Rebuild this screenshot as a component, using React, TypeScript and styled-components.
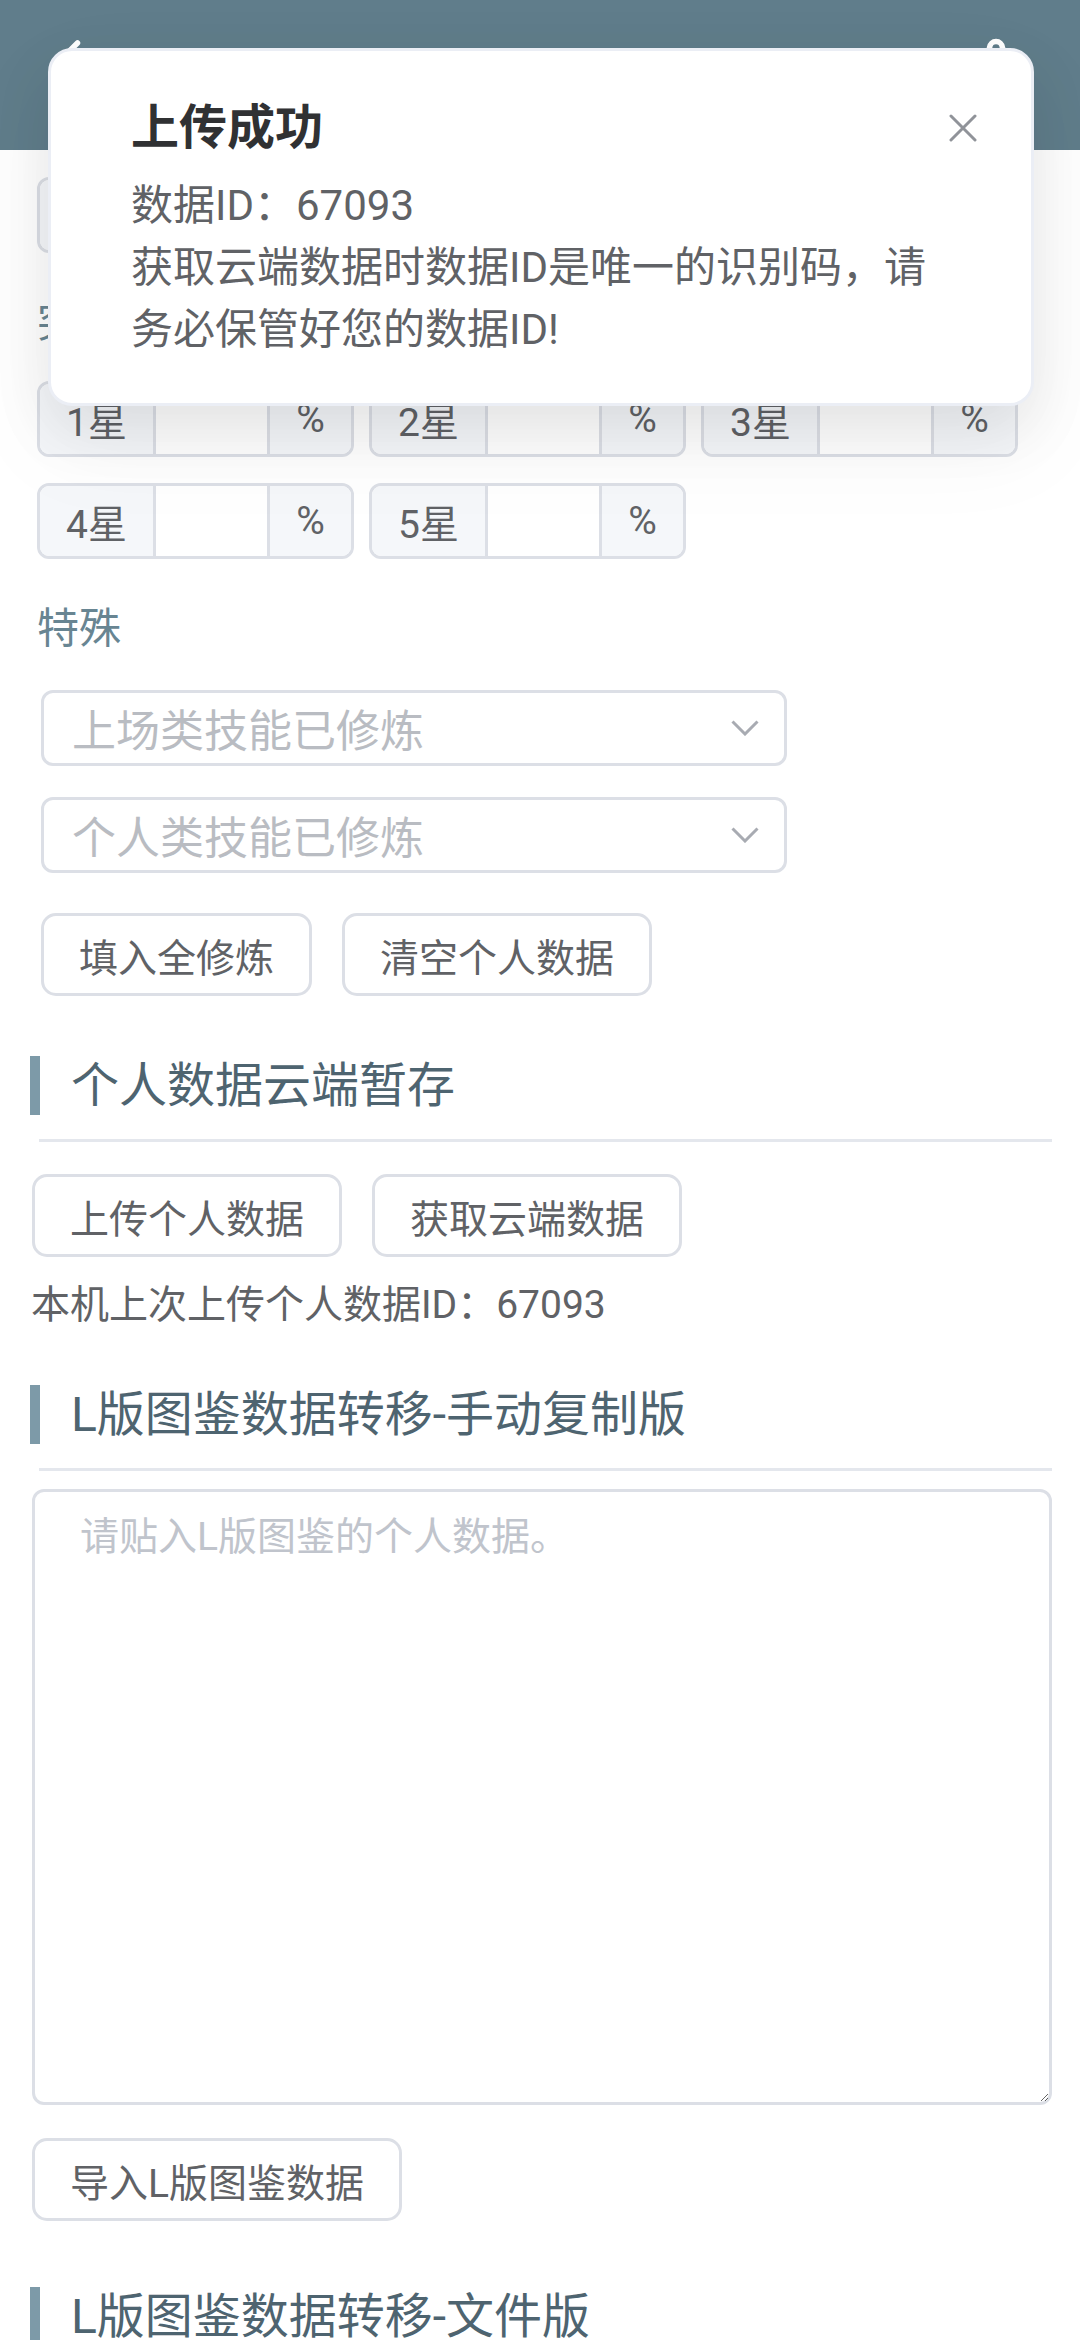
import React from 'react';
import styled, { createGlobalStyle } from 'styled-components';
import { Settings, ChevronLeft } from 'lucide-react';

const GlobalStyle = createGlobalStyle`
  html, body {
    margin: 0;
    padding: 0;
    background: #fff;
  }
  body {
    font-family: Roboto, "Noto Sans CJK SC", sans-serif;
    color: #606266;
  }
  * {
    box-sizing: border-box;
  }
`;

const Page = styled.div`
  position: relative;
  width: 1080px;
  padding-bottom: 120px;
`;

const Header = styled.header`
  height: 150px;
  background: #607d8b;
  color: #fff;
  display: flex;
  align-items: flex-start;
  justify-content: space-between;
  padding: 28px 51px 0 40px;
`;

const Notice = styled.div`
  position: absolute;
  top: 48px;
  left: 48px;
  width: 986px;
  padding: 41px 90px 42px 80px;
  background: #fff;
  border: 3px solid #ebeef5;
  border-radius: 24px;
  box-shadow: 0 36px 96px 12px rgba(0, 0, 0, 0.04), 0 24px 60px rgba(0, 0, 0, 0.08);
  z-index: 10;
`;

const NoticeTitle = styled.div`
  font-size: 48px;
  line-height: 72px;
  font-weight: 700;
  color: #303133;
`;

const NoticeText = styled.div`
  margin-top: 11px;
  font-size: 42px;
  line-height: 62px;
  color: #606266;
`;

const CloseButton = styled.span`
  position: absolute;
  top: 63px;
  left: 898px;
  width: 28px;
  height: 28px;
  display: flex;
`;

const Form = styled.section`
  padding-left: 37px;
`;

const Label = styled.div<{ $after: number }>`
  margin: 40px 0 ${(p) => p.$after}px;
  font-size: 42px;
  line-height: 60px;
  color: #688592;
`;

const StarGrid = styled.div`
  display: flex;
  flex-wrap: wrap;
  gap: 26px 15px;
`;

const Group = styled.div<{ $width?: number }>`
  display: flex;
  width: ${(p) => p.$width ?? 317}px;
  height: 76px;
  border: 3px solid #dcdfe6;
  border-radius: 12px;
  overflow: hidden;
  font-size: 39px;
  color: #606266;
`;

const Prepend = styled.div`
  width: 116px;
  flex: none;
  display: flex;
  align-items: center;
  justify-content: center;
  background: #f5f7fa;
  border-right: 3px solid #dcdfe6;
`;

const Field = styled.input`
  flex: 1;
  min-width: 0;
  border: 0;
  outline: 0;
  background: #fff;
  font: inherit;
`;

const Append = styled.div`
  width: 84px;
  flex: none;
  display: flex;
  align-items: center;
  justify-content: center;
  background: #f5f7fa;
  border-left: 3px solid #dcdfe6;
`;

const SelectList = styled.div`
  display: flex;
  flex-direction: column;
  gap: 31px;
  margin-left: 4px;
`;

const SelectBox = styled.div`
  width: 746px;
  height: 76px;
  display: flex;
  align-items: center;
  justify-content: space-between;
  padding: 0 25px 0 28px;
  border: 3px solid #dcdfe6;
  border-radius: 12px;
  font-size: 44px;
  color: #b9bcc2;
`;

const ButtonRow = styled.div<{ $top: number; $left?: number }>`
  display: flex;
  gap: 30px;
  margin-top: ${(p) => p.$top}px;
  margin-left: ${(p) => p.$left ?? 0}px;
`;

const Button = styled.button`
  height: 83px;
  padding: 0 35px;
  background: #fff;
  border: 3px solid #dcdfe6;
  border-radius: 15px;
  font-family: inherit;
  font-size: 39px;
  color: #606266;
`;

const Lower = styled.section`
  padding-left: 30px;
`;

const SectionTitle = styled.h2<{ $top: number }>`
  margin: ${(p) => p.$top}px 0 0;
  height: 59px;
  line-height: 59px;
  border-left: 10px solid #7d9aa8;
  padding-left: 31px;
  font-size: 48px;
  font-weight: 400;
  color: #4e6470;
`;

const Divider = styled.hr`
  margin: 24px 28px 0 9px;
  height: 3px;
  border: 0;
  background: #e4e7ed;
`;

const Info = styled.div`
  margin: 21px 0 0 1px;
  font-size: 39px;
  line-height: 54px;
  color: #606266;
`;

const PasteArea = styled.textarea`
  display: block;
  width: 1020px;
  height: 616px;
  margin: 18px 0 0 2px;
  padding: 18px 45px;
  border: 3px solid #dcdfe6;
  border-radius: 12px;
  font-family: inherit;
  font-size: 39px;
  line-height: 54px;
  color: #606266;
  outline: 0;
  &::placeholder {
    color: #c0c4cc;
  }
`;

const stars = ['1星', '2星', '3星', '4星', '5星'];

const Chevron = () => (
  <svg width="28" height="16" viewBox="0 0 28 16" fill="none">
    <polyline points="1.5,1.5 14,14 26.5,1.5" stroke="#a8abb2" strokeWidth="3" />
  </svg>
);

const StarInput = ({ label }: { label: string }) => (
  <Group>
    <Prepend>{label}</Prepend>
    <Field />
    <Append>%</Append>
  </Group>
);

const App = () => {
  return (
    <Page>
      <GlobalStyle />
      <Header>
        <ChevronLeft size={60} strokeWidth={2.2} />
        <Settings size={66} strokeWidth={2} style={{ marginTop: 8 }} />
      </Header>

      <Notice>
        <NoticeTitle>上传成功</NoticeTitle>
        <NoticeText>
          <div>数据ID：67093</div>
          <div>获取云端数据时数据ID是唯一的识别码，请务必保管好您的数据ID!</div>
        </NoticeText>
        <CloseButton>
          <svg width="28" height="28" viewBox="0 0 28 28">
            <path d="M2 2 L26 26 M26 2 L2 26" stroke="#909399" strokeWidth="3" strokeLinecap="round" />
          </svg>
        </CloseButton>
      </Notice>

      <Form>
        <Group $width={746} style={{ marginTop: 27 }}>
          <Prepend>等级</Prepend>
          <Field />
        </Group>
        <Label $after={28}>突破</Label>
        <StarGrid>
          {stars.map((s) => (
            <StarInput key={s} label={s} />
          ))}
        </StarGrid>
        <Label $after={31}>特殊</Label>
        <SelectList>
          <SelectBox>
            上场类技能已修炼
            <Chevron />
          </SelectBox>
          <SelectBox>
            个人类技能已修炼
            <Chevron />
          </SelectBox>
        </SelectList>
        <ButtonRow $top={40} $left={4}>
          <Button>填入全修炼</Button>
          <Button>清空个人数据</Button>
        </ButtonRow>
      </Form>

      <Lower>
        <SectionTitle $top={60}>个人数据云端暂存</SectionTitle>
        <Divider />
        <ButtonRow $top={32} $left={2}>
          <Button>上传个人数据</Button>
          <Button>获取云端数据</Button>
        </ButtonRow>
        <Info>本机上次上传个人数据ID：67093</Info>

        <SectionTitle $top={53}>L版图鉴数据转移-手动复制版</SectionTitle>
        <Divider />
        <PasteArea placeholder="请贴入L版图鉴的个人数据。" />
        <ButtonRow $top={33} $left={2}>
          <Button>导入L版图鉴数据</Button>
        </ButtonRow>

        <SectionTitle $top={66}>L版图鉴数据转移-文件版</SectionTitle>
        <Divider />
      </Lower>
    </Page>
  );
};

export default App;
